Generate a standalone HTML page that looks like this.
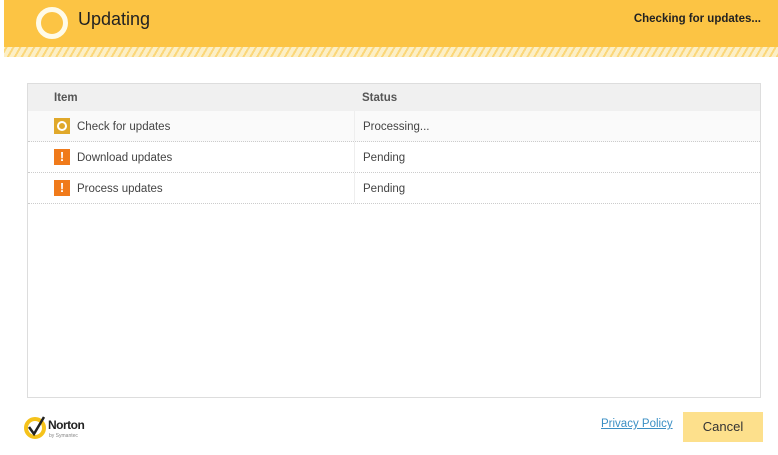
<!DOCTYPE html>
<html><head><style>
body{margin:0;width:778px;height:455px;background:#fff;font-family:"Liberation Sans",sans-serif;position:relative;overflow:hidden;color:#333}
.hdr{position:absolute;left:4px;top:0;width:774px;height:47px;background:#fcc444}
.stripe{position:absolute;left:4px;top:47px;width:774px;height:10px;background:repeating-linear-gradient(-60deg,#fbd77a 0 2px,#fcefc6 2px 6px)}
.ring{position:absolute;left:36px;top:7px;width:22px;height:22px;border:5px solid #fffbe8;border-radius:50%}
.title{position:absolute;left:78px;top:9px;font-size:18px;color:#222}
.chk{position:absolute;right:17px;top:13px;font-size:11.5px;font-weight:bold;color:#222}
.tbl{position:absolute;left:27px;top:83px;width:732px;height:313px;border:1px solid #ddd}
.th{position:absolute;left:0;top:0;width:732px;height:27px;background:#f0f0f0;font-size:11.5px;font-weight:bold;color:#555}
.row{position:absolute;left:0;width:732px;height:30px;border-bottom:1px dotted #ccc;font-size:11.5px;color:#444}
.c1{position:absolute;left:49px;top:10px}.c2{position:absolute;left:335px;top:10px}
.div{position:absolute;left:326px;top:0;height:30px;border-left:1px solid #eee}
.ic{position:absolute;left:26px;top:7px;width:16px;height:16px;color:#fff;font-weight:bold;font-size:13px;text-align:center;line-height:16px}
</style></head><body>
<div class="hdr"></div><div class="stripe"></div>
<div class="ring"></div><div class="title">Updating</div>
<div class="chk">Checking for updates...</div>
<div class="tbl">
<div class="th"><span style="position:absolute;left:26px;top:8px">Item</span><span style="position:absolute;left:334px;top:8px">Status</span></div>
<div class="row" style="top:27px;background:#fafafa"><div class="div"></div><div class="ic" style="background:#e0a82a"><div style="width:6px;height:6px;border:2px solid #fff;border-radius:50%;margin:3px"></div></div><span class="c1">Check for updates</span><span class="c2">Processing...</span></div>
<div class="row" style="top:58px"><div class="div"></div><div class="ic" style="background:#f07a1a">!</div><span class="c1">Download updates</span><span class="c2">Pending</span></div>
<div class="row" style="top:89px"><div class="div"></div><div class="ic" style="background:#f07a1a">!</div><span class="c1">Process updates</span><span class="c2">Pending</span></div>
</div>
<svg style="position:absolute;left:24px;top:413px" width="70" height="28">
<circle cx="11" cy="15" r="9" fill="none" stroke="#f5c21b" stroke-width="4"/>
<path d="M5 14 L10 21 L20 4" fill="none" stroke="#222" stroke-width="2.5"/>
<text x="24" y="16" font-family="Liberation Sans" font-size="12" font-weight="bold" fill="#222" letter-spacing="-0.5">Norton</text>
<text x="25" y="24" font-family="Liberation Sans" font-size="5" fill="#888">by Symantec</text>
</svg>
<a style="position:absolute;left:601px;top:418px;font-size:11.5px;color:#3b8fc4;text-decoration:underline">Privacy Policy</a>
<div style="position:absolute;left:683px;top:412px;width:80px;height:30px;background:#fde08c;font-size:13px;color:#333;text-align:center;line-height:30px">Cancel</div>
</body></html>
